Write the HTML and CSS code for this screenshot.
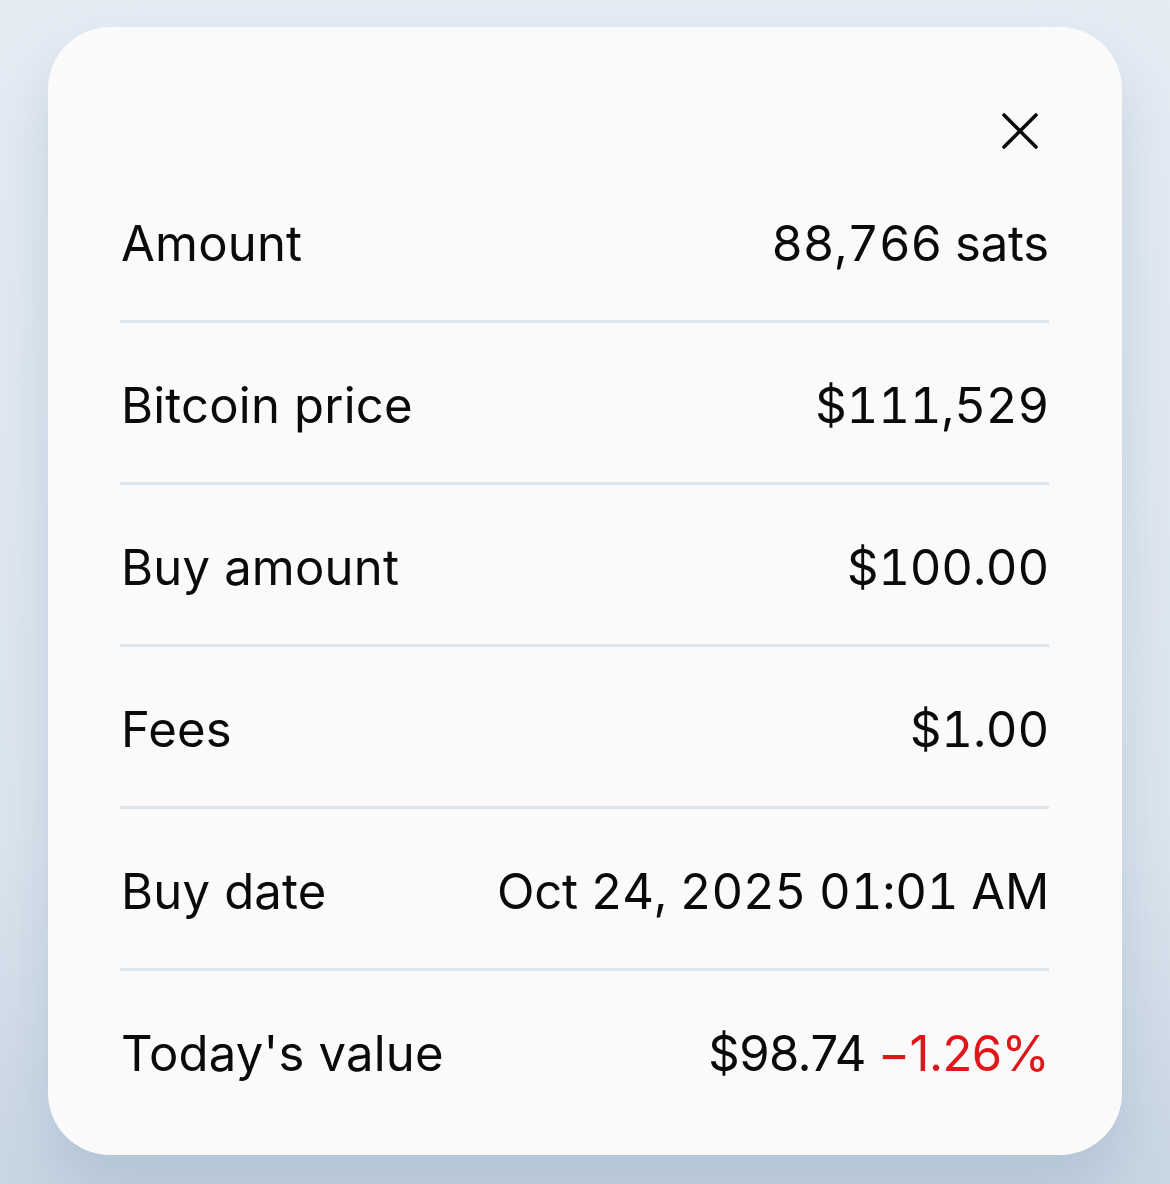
FILE: index.html
```html
<!DOCTYPE html>
<html lang="en">
<head>
    <meta charset="UTF-8">
    <meta name="viewport" content="width=device-width, initial-scale=1.0">
    <title>Purchase details</title>
    <link rel="stylesheet" href="styles.css">
</head>
<body>
    <div class="sheet">
        <div class="sheet-header">
            <button type="button" class="close-btn" aria-label="Close">
                <svg width="36" height="36" viewBox="0 0 36 36" fill="none" stroke="#0a0a0a" stroke-width="3.6" stroke-linecap="round">
                    <path d="M2 2L34 34M34 2L2 34"/>
                </svg>
            </button>
        </div>
        <div class="detail-list">
            <div class="detail-row">
                <span class="label">Amount</span>
                <span class="value">88,766 sats</span>
            </div>
            <div class="detail-row">
                <span class="label">Bitcoin price</span>
                <span class="value">$111,529</span>
            </div>
            <div class="detail-row">
                <span class="label">Buy amount</span>
                <span class="value">$100.00</span>
            </div>
            <div class="detail-row">
                <span class="label">Fees</span>
                <span class="value">$1.00</span>
            </div>
            <div class="detail-row">
                <span class="label">Buy date</span>
                <span class="value">Oct 24, 2025 01:01 AM</span>
            </div>
            <div class="detail-row">
                <span class="label">Today's value</span>
                <span class="value value-compact">$98.74<span class="change-down">&minus;1.26%</span></span>
            </div>
        </div>
    </div>
</body>
</html>
```

FILE: styles.css
```css
body {
    margin: 0;
    height: 1184px;
    font-family: 'Inter', 'Noto Sans', sans-serif;
    background: linear-gradient(180deg, #e5ecf4 0%, #dde6ef 70%, #c9d6e3 100%);
    color: #0a0a0a;
    overflow: hidden;
}

.sheet {
    margin: 27px 48px 0;
    height: 1128px;
    box-sizing: border-box;
    background-color: #fafafa;
    border-radius: 62px;
    padding: 0 73px 0 72px;
    box-shadow: 0 34px 60px rgba(120, 150, 180, 0.3);
}

.sheet-header {
    height: 134px;
    box-sizing: border-box;
    padding-top: 86px;
    display: flex;
    justify-content: flex-end;
    align-items: flex-start;
}

.close-btn {
    background: none;
    border: none;
    padding: 0;
    margin-right: 11px;
    width: 36px;
    height: 36px;
    cursor: pointer;
}

.close-btn svg {
    display: block;
}

.detail-row {
    display: flex;
    justify-content: space-between;
    align-items: center;
    padding: 53px 0 46px;
    border-bottom: 3px solid #dfe5ec;
    font-size: 49px;
    line-height: 60px;
    letter-spacing: 0.2px;
}

.detail-row:last-child {
    border-bottom: none;
}

.label {
    padding-left: 1px;
}

.value {
    font-variant-numeric: tabular-nums;
    letter-spacing: -0.2px;
}

.value-compact {
    font-variant-numeric: normal;
    letter-spacing: -0.6px;
}

.change-down {
    color: #e0161b;
    margin-left: 12px;
}
```
